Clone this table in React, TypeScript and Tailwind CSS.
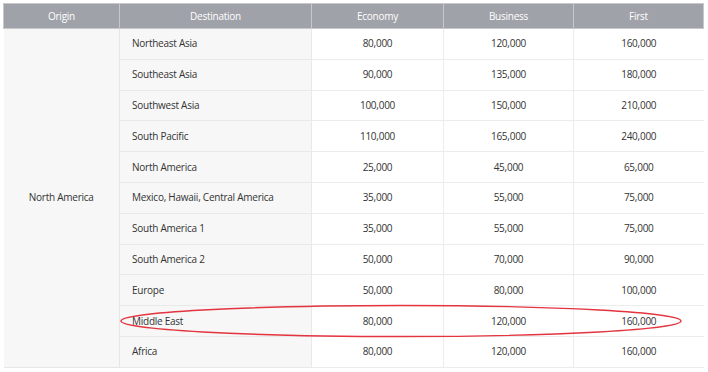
import React from "react";

type Row = {
  destination: string;
  economy: string;
  business: string;
  first: string;
};

const rows: Row[] = [
  { destination: "Northeast Asia", economy: "80,000", business: "120,000", first: "160,000" },
  { destination: "Southeast Asia", economy: "90,000", business: "135,000", first: "180,000" },
  { destination: "Southwest Asia", economy: "100,000", business: "150,000", first: "210,000" },
  { destination: "South Pacific", economy: "110,000", business: "165,000", first: "240,000" },
  { destination: "North America", economy: "25,000", business: "45,000", first: "65,000" },
  { destination: "Mexico, Hawaii, Central America", economy: "35,000", business: "55,000", first: "75,000" },
  { destination: "South America 1", economy: "35,000", business: "55,000", first: "75,000" },
  { destination: "South America 2", economy: "50,000", business: "70,000", first: "90,000" },
  { destination: "Europe", economy: "50,000", business: "80,000", first: "100,000" },
  { destination: "Middle East", economy: "80,000", business: "120,000", first: "160,000" },
  { destination: "Africa", economy: "80,000", business: "120,000", first: "160,000" },
];

const App: React.FC = () => {
  return (
    <div
      className="w-[708px] h-[372px] bg-white p-[3px] pr-[4px] text-[10px] tracking-[-0.25px] text-[#333]"
      style={{ fontFamily: '"Open Sans", "Noto Sans", sans-serif' }}
    >
      <div className="relative">
        <table className="w-full border-collapse table-fixed">
          <colgroup>
            <col className="w-[116px]" />
            <col className="w-[192px]" />
            <col className="w-[132px]" />
            <col className="w-[130px]" />
            <col />
          </colgroup>
          <thead>
            <tr className="h-[25px] bg-[#9fa2a9] text-white">
              <th className="font-normal border border-[#c6c8cc]">Origin</th>
              <th className="font-normal border border-[#c6c8cc]">Destination</th>
              <th className="font-normal border border-[#c6c8cc]">Economy</th>
              <th className="font-normal border border-[#c6c8cc]">Business</th>
              <th className="font-normal border border-[#c6c8cc]">First</th>
            </tr>
          </thead>
          <tbody>
            {rows.map((row, i) => (
              <tr key={row.destination} className="h-[30.8px]">
                {i === 0 && (
                  <td
                    rowSpan={rows.length}
                    className="bg-[#f7f7f7] text-center border-r border-b border-[#e6e6e6]"
                  >
                    North America
                  </td>
                )}
                <td className="bg-[#f7f7f7] pl-3 border-r border-b border-[#e9e9e9]">
                  {row.destination}
                </td>
                <td className="text-center border-r border-b border-[#ececec]">{row.economy}</td>
                <td className="text-center border-r border-b border-[#ececec]">{row.business}</td>
                <td className="text-center border-b border-[#ececec]">{row.first}</td>
              </tr>
            ))}
          </tbody>
        </table>

        {/* hand drawn highlight around Middle East row */}
        <svg
          className="absolute left-0 top-0 pointer-events-none"
          width="704"
          height="372"
          viewBox="0 0 704 372"
        >
          <ellipse
            cx="398"
            cy="318"
            rx="280"
            ry="15.5"
            fill="none"
            stroke="#e3343f"
            strokeWidth="1.4"
          />
        </svg>
      </div>
    </div>
  );
};

export default App;
